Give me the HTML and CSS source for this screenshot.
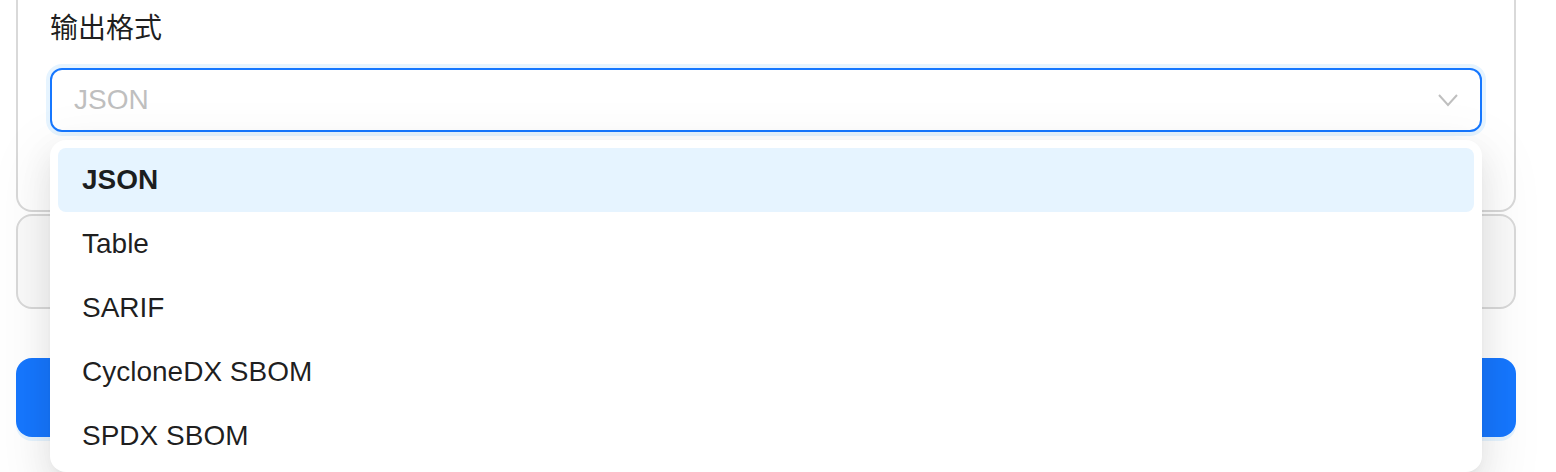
FILE: index.html
```html
<!DOCTYPE html>
<html lang="zh-CN">

<head>
    <meta charset="UTF-8">
    <meta name="viewport" content="width=device-width, initial-scale=1.0">
    <title>输出格式</title>

    <link rel="stylesheet" href="styles.css">
</head>

<body>
    <div class="page">
        <div class="card card-form">
            <label class="field-label">输出格式</label>
            <div class="select">
                <div class="select-box">
                    <span class="select-value">JSON</span>
                    <svg class="select-arrow" width="22" height="14" viewBox="0 0 22 14">
                        <polyline points="2,2 11,12 20,2" fill="none" stroke="#bfbfbf" stroke-width="2" />
                    </svg>
                </div>
                <div class="dropdown">
                    <div class="option active">JSON</div>
                    <div class="option">Table</div>
                    <div class="option">SARIF</div>
                    <div class="option">CycloneDX SBOM</div>
                    <div class="option">SPDX SBOM</div>
                </div>
            </div>
        </div>

        <div class="card card-more"></div>

        <div class="btn-primary"></div>
    </div>
</body>

</html>
```

FILE: styles.css
```css
* {
    box-sizing: border-box;
}

html,
body {
    min-height: 100%;
}

body {
    margin: 0;
    min-height: 472px;
    background-color: #ffffff;
    font-family: "Liberation Sans", "Noto Sans CJK SC", sans-serif;
    color: rgba(0, 0, 0, 0.88);
}

.page {
    width: 1500px;
    margin-left: 16px;
    padding-bottom: 40px;
    display: flex;
    flex-direction: column;
}

.card {
    border: 2px solid #d9d9d9;
    border-radius: 16px;
    background-color: #ffffff;
}

/* top card is scrolled off, only its lower part shows */
.card-form {
    border-top: 0;
    border-radius: 0 0 16px 16px;
    padding: 7px 32px 78px 32px;
}

.field-label {
    display: block;
    font-size: 28px;
    line-height: 44px;
    margin-bottom: 17px;
}

.select {
    position: relative;
}

.select-box {
    height: 64px;
    border: 2px solid #1677ff;
    border-radius: 12px;
    background-color: #ffffff;
    box-shadow: 0 0 0 4px rgba(5, 145, 255, 0.1);
    padding: 0 22px;

    display: flex;
    align-items: center;
    justify-content: space-between;
}

.select-value {
    font-size: 28px;
    color: #bfbfbf;
}

.select-arrow {
    margin-right: -1px;
}

.dropdown {
    position: absolute;
    top: 72px;
    left: 0;
    right: 0;
    z-index: 10;
    background-color: #ffffff;
    border-radius: 16px;
    padding: 8px 8px 4px 8px;
    box-shadow: 0 12px 32px 0 rgba(0, 0, 0, 0.08),
        0 6px 12px -8px rgba(0, 0, 0, 0.12),
        0 18px 56px 16px rgba(0, 0, 0, 0.05);
}

.option {
    height: 64px;
    padding: 0 24px;
    border-radius: 8px;
    font-size: 28px;
    display: flex;
    align-items: center;
}

.option.active {
    background-color: #e6f4ff;
    font-weight: bold;
}

.card-more {
    margin-top: 2px;
    height: 95px;
    background-color: #fafafa;
}

.btn-primary {
    margin-top: 49px;
    height: 79px;
    border-radius: 16px;
    background-color: #1677ff;
    box-shadow: 0 4px 0 rgba(5, 145, 255, 0.1);
}
```
